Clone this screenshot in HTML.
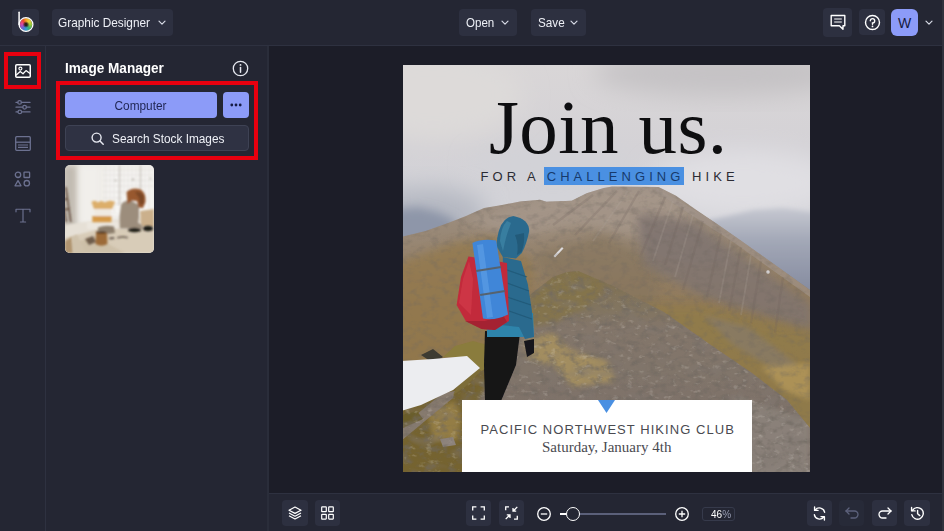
<!DOCTYPE html>
<html lang="en">
<head>
<meta charset="utf-8">
<title>Graphic Designer</title>
<style>
*{box-sizing:border-box;margin:0;padding:0}
html,body{width:944px;height:531px;overflow:hidden;background:#1c1d28;font-family:"Liberation Sans",sans-serif;color:#eef0f6}
.abs{position:absolute}
#top{left:0;top:0;width:944px;height:46px;background:#242633;border-bottom:1px solid #2e3140}
#rail{left:0;top:46px;width:46px;height:485px;background:#242633;border-right:1px solid #2e3140}
#panel{left:46px;top:46px;width:223px;height:485px;background:#242633;border-right:2px solid #2a2d3a}
#stage{left:269px;top:46px;width:675px;height:447px;background:#1c1d28}
#bottom{left:269px;top:493px;width:675px;height:38px;background:#242633;box-shadow:inset 0 1px 0 #2e3140}
.btn{position:absolute;background:#2d3040;border-radius:4px;color:#eef0f6;font-size:13px;display:flex;align-items:center;justify-content:center;white-space:nowrap}
.t{display:inline-block;transform:scaleX(.91);transform-origin:left center}
.red{position:absolute;border:3px solid #e8000f}
svg{position:absolute;overflow:visible}
</style>
</head>
<body>
<div id="top" class="abs">
  <div class="btn" style="left:12px;top:9px;width:27px;height:27px"></div>
  <div class="abs" style="left:19.900px;top:18.400px;width:12.200px;height:12.200px;border-radius:50%;background:radial-gradient(circle,#2a1d18 0,#2a1d18 12%,rgba(42,29,24,0) 38%),conic-gradient(from 0deg,#f2a01f,#e6d23a 12%,#9ccc3c 25%,#3fae6a 38%,#2f9fd0 50%,#5b6ed6 60%,#b04fc0 70%,#e64a8a 80%,#ea4a2e 90%,#f2a01f)"></div>
  <svg style="left:12px;top:9px" width="27" height="27" viewBox="0 0 27 27">
    <circle cx="14" cy="15.500" r="6.900" fill="none" stroke="#fff" stroke-width="1.300"/><path d="M7.100 3.300 V15.500" fill="none" stroke="#fff" stroke-width="1.500" stroke-linecap="round"/>
  </svg>
  <div class="btn" style="left:52px;top:9px;width:121px;height:27px;justify-content:flex-start;padding-left:6px"><span class="t">Graphic Designer</span></div>
  <svg style="left:158px;top:20px" width="8" height="6" viewBox="0 0 8 6"><path d="M1 1.2 L4 4.2 L7 1.2" fill="none" stroke="#d8dbe6" stroke-width="1.2" stroke-linecap="round" stroke-linejoin="round"/></svg>

  <div class="btn" style="left:459px;top:9px;width:58px;height:27px;justify-content:flex-start;padding-left:7px"><span class="t" style="transform:scaleX(.89)">Open</span></div>
  <svg style="left:501px;top:20px" width="8" height="6" viewBox="0 0 8 6"><path d="M1 1.2 L4 4.2 L7 1.2" fill="none" stroke="#d8dbe6" stroke-width="1.2" stroke-linecap="round" stroke-linejoin="round"/></svg>
  <div class="btn" style="left:531px;top:9px;width:55px;height:27px;justify-content:flex-start;padding-left:7px"><span class="t" style="transform:scaleX(.9)">Save</span></div>
  <svg style="left:570px;top:20px" width="8" height="6" viewBox="0 0 8 6"><path d="M1 1.2 L4 4.2 L7 1.2" fill="none" stroke="#d8dbe6" stroke-width="1.2" stroke-linecap="round" stroke-linejoin="round"/></svg>

  <div class="btn" style="left:823px;top:8px;width:29px;height:29px"></div>
  <svg style="left:830px;top:14px" width="16" height="17" viewBox="0 0 16 17"><path d="M1.2 1.5 H14.8 V11.8 H13 V15.2 L9.4 11.8 H1.2 Z" fill="none" stroke="#fff" stroke-width="1.4" stroke-linejoin="round"/><path d="M4.2 5 H11.8 M4.2 8 H11.8" stroke="#fff" stroke-width="1.2"/></svg>
  <div class="btn" style="left:859px;top:9px;width:26px;height:26px"></div>
  <svg style="left:864px;top:14px" width="17" height="17" viewBox="0 0 17 17"><circle cx="8.5" cy="8.5" r="7" fill="none" stroke="#fff" stroke-width="1.4"/><path d="M6.3 6.8 A2.2 2.2 0 1 1 8.5 9 V10.3" fill="none" stroke="#fff" stroke-width="1.4" stroke-linecap="round"/><circle cx="8.5" cy="12.4" r="0.9" fill="#fff"/></svg>
  <div class="btn" style="left:891px;top:9px;width:27px;height:27px;background:#8c9bf8;color:#151a3e;font-size:14px;border-radius:6px">W</div>
  <svg style="left:925px;top:20px" width="8" height="6" viewBox="0 0 8 6"><path d="M1 1.2 L4 4.2 L7 1.2" fill="none" stroke="#d8dbe6" stroke-width="1.2" stroke-linecap="round" stroke-linejoin="round"/></svg>
</div>

<div id="rail" class="abs">
  <svg style="left:15px;top:18px" width="16" height="14" viewBox="0 0 16 14"><rect x="0.75" y="0.75" width="14.5" height="12.5" rx="1" fill="none" stroke="#fff" stroke-width="1.5"/><circle cx="5.4" cy="4.6" r="1.5" fill="none" stroke="#fff" stroke-width="1.2"/><path d="M1 11.2 L5.2 7.6 L8 9.8 L11 6.6 L15 9.6" fill="none" stroke="#fff" stroke-width="1.3" stroke-linejoin="round"/></svg>
  <svg style="left:15px;top:53px" width="16" height="17" viewBox="0 0 16 17" fill="none" stroke="#6c7190" stroke-width="1.25" stroke-linecap="round"><path d="M1 3.400 H2.800 M6.400 3.400 H15 M1 8.200 H7.800 M11.400 8.200 H15 M1 12.900 H3 M6.600 12.900 H15"/><circle cx="4.600" cy="3.400" r="1.800"/><circle cx="9.600" cy="8.200" r="1.800"/><circle cx="4.800" cy="12.900" r="1.800"/></svg>
  <svg style="left:15px;top:90px" width="16" height="15" viewBox="0 0 16 15" fill="none" stroke="#6c7190" stroke-width="1.3"><rect x="0.7" y="0.7" width="14.6" height="13.6" rx="1"/><path d="M1 6.2 H15"/><path d="M3 9 H13 M3 11.4 H13" stroke-width="1.1"/></svg>
  <svg style="left:14px;top:125px" width="17" height="16" viewBox="0 0 17 16" fill="none" stroke="#6c7190" stroke-width="1.3" stroke-linejoin="round"><circle cx="4" cy="3.8" r="2.7"/><rect x="10" y="1.1" width="5.6" height="5.4" rx="0.6"/><path d="M4 9.6 L7 14.8 H1 Z"/><circle cx="12.8" cy="12.2" r="2.7"/></svg>
  <svg style="left:15px;top:162px" width="16" height="16" viewBox="0 0 16 16" fill="none" stroke="#6c7190" stroke-width="1.150" stroke-linecap="round" stroke-linejoin="round"><path d="M1 3.800 V1.200 H15 V3.800 M8 1.200 V14 M5.400 14 H10.600"/></svg>
</div>
<div class="red" style="left:4px;top:52px;width:37px;height:37px;border-width:4px"></div>
<div id="panel" class="abs">
  <div class="abs" style="left:19px;top:14px;font-size:14px;font-weight:bold;color:#fff;white-space:nowrap"><span class="t" style="transform:scaleX(.97)">Image Manager</span></div>
  <svg style="left:186px;top:14px" width="17" height="17" viewBox="0 0 17 17"><circle cx="8.5" cy="8.5" r="7.2" fill="none" stroke="#e6e8f0" stroke-width="1.3"/><path d="M8.5 7.6 V12.2" stroke="#e6e8f0" stroke-width="1.5" stroke-linecap="round"/><circle cx="8.5" cy="4.9" r="0.95" fill="#e6e8f0"/></svg>
  <div class="btn" style="left:19px;top:46px;width:152px;height:26px;background:#8c9bf8;color:#1f2552"><span class="t" style="transform-origin:center">Computer</span></div>
  <div class="btn" style="left:177px;top:46px;width:26px;height:26px;background:#8c9bf8"></div>
  <svg style="left:184px;top:57px" width="12" height="4" viewBox="0 0 12 4"><circle cx="1.800" cy="2" r="1.400" fill="#161b45"/><circle cx="6" cy="2" r="1.400" fill="#161b45"/><circle cx="10.200" cy="2" r="1.400" fill="#161b45"/></svg>
  <div class="btn" style="left:19px;top:79px;width:184px;height:26px;background:#2f3243;border:1px solid #3e4254;justify-content:flex-start;padding-left:46px"><span class="t">Search Stock Images</span></div>
  <svg style="left:45px;top:86px" width="13" height="13" viewBox="0 0 13 13"><circle cx="5.6" cy="5.6" r="4.5" fill="none" stroke="#e6e8f0" stroke-width="1.4"/><path d="M9 9 L12.2 12.2" stroke="#e6e8f0" stroke-width="1.5" stroke-linecap="round"/></svg>
  <svg style="left:19px;top:119px;overflow:hidden;border-radius:5px" width="89" height="88" viewBox="0 0 89 88">
    <defs><filter id="tb" x="-20%" y="-20%" width="140%" height="140%"><feGaussianBlur stdDeviation="0.9"/></filter><filter id="tb3" x="-30%" y="-30%" width="160%" height="160%"><feGaussianBlur stdDeviation="3"/></filter></defs>
    <rect width="89" height="88" fill="#e9e6e0"/>
    <rect x="-3" y="0" width="16" height="66" fill="#c2bcb2" filter="url(#tb3)"/>
    <rect x="14" y="0" width="22" height="60" fill="#f1efeb" filter="url(#tb3)"/>
    <rect x="38" y="0" width="52" height="52" fill="#f6f5f3" filter="url(#tb3)"/>
    <g stroke="#dcd8d2" stroke-width="0.7" opacity=".85" filter="url(#tb)"><path d="M41 0 V48 M45 0 V48 M49 0 V48 M59 0 V30 M63 0 V26 M67 0 V22 M71 0 V22 M80 0 V30 M84 0 V44 M38 5 H89 M38 10 H89 M38 15.500 H89 M38 21 H89 M38 27 H60 M38 33 H58 M38 39 H56"/></g>
    <g stroke="#cfcbc5" stroke-width="2" opacity=".9" filter="url(#tb)"><path d="M54.500 0 V40 M75.500 0 V24"/></g>
    <path d="M37.200 0 V36" stroke="#8f897f" stroke-width="0.9" filter="url(#tb)"/>
    <g fill="#6a5f55" opacity=".6" filter="url(#tb)"><circle cx="50.500" cy="15.500" r=".8"/><circle cx="68" cy="14.500" r=".9"/><circle cx="85.500" cy="13.500" r=".8"/></g>
    <path d="M0 22 L1.500 22 L6.500 57 L5 57Z M-4 30 L-2.500 30 L2 57 L0.500 57Z M-2 34 L3 33 L3 34.500 L-2 35.500Z M-1 44 L4.500 43 L4.500 44.500 L-1 45.500Z" fill="#5a4030" filter="url(#tb)"/>
    <path d="M0 60 L20 57 L52 55 L89 52 V88 H0Z" fill="#e6e0d6" filter="url(#tb)"/>
    <path d="M22 57 H53 V64 H22Z" fill="#ece7df" filter="url(#tb)"/>
    <path d="M75 46 L89 44 V62 L76 62Z" fill="#cbb08c" filter="url(#tb)"/>
    <path d="M0 73 L33 64.500 L62 63.500 L89 63 V88 H0Z" fill="#d8ccb8" filter="url(#tb)"/>
    <path d="M0 80 L30 72 L60 88 H0Z" fill="#cbbda5" opacity=".8" filter="url(#tb)"/>
    <path d="M0 76 L7 72 L8 88 H0Z" fill="#b09470" filter="url(#tb)"/>
    <path d="M7 72 L12 69.500 L20 86 L19 88 H8Z" fill="#cfc2ac" filter="url(#tb)"/>
    <g filter="url(#tb)">
    <path d="M29 44 L46 44 L46 51 L30 51Z" fill="#f0eae1"/>
    <path d="M26.500 37 Q30 34.500 33 37.500 Q36 34.500 40 37.500 Q44 34.500 50 37 L47 44 L29 44Z" fill="#dcae6a"/>
    <rect x="27.300" y="51" width="19.200" height="6.200" fill="#d59a48"/>
    <path d="M56 40 Q58 35 66 35.500 L74 40 L74 52 L72 63.500 L55 63.500 L54.500 52Z" fill="#9c8d7c"/>
    <path d="M61.500 27 Q67 21.500 76 24.500 Q81.500 29 80.500 37 L78 43 L73.500 42.500 L72 36 L67 35.500 L62.500 39Z" fill="#98592f"/>
    <path d="M70 27 Q76 26 79 31 L78.500 39 L75 40 L74 33Z" fill="#6e3f22" opacity=".7"/>
    <path d="M70 56 L77 60 L78 64 L70 63Z" fill="#9c8d7c"/>
    <path d="M31 67.500 Q30.500 66 36.500 66 Q42.500 66 42 67.500 L42.500 79 Q36.500 82.500 30.500 79Z" fill="#9c6a38"/>
    <ellipse cx="36.500" cy="67.200" rx="5.300" ry="1.300" fill="#4e3520"/>
    <path d="M33 62.500 Q40 59.500 49 61.500 L50 68 L42.500 69 L42 67 Q37 65.500 33 67Z" fill="#8c7e6c"/>
    <ellipse cx="69.500" cy="65" rx="6.800" ry="2.200" fill="#1d1a18"/>
    <ellipse cx="83" cy="63.500" rx="5.200" ry="2.800" fill="#1d1a18"/>
    <path d="M20 74 L28 71 L31 77 L24 80Z" fill="#5e4a3a" opacity=".85"/>
    <path d="M44 72.500 L49 72 L49.500 74 L44.500 74.500Z M52 72 L58 71 L58.500 72.500 L52.500 73.500Z M58 71 L63 72 L62.500 73.500 L58 72.500Z" fill="#4e4036" opacity=".8"/>
    </g>
  </svg>
</div>
<div class="red" style="left:56px;top:81px;width:202px;height:79px;border-width:4px"></div>
<div id="stage" class="abs"></div>
<svg id="photo" style="left:403px;top:65px;overflow:hidden" width="407" height="407" viewBox="0 0 407 407">
  <defs>
    <linearGradient id="sky" x1="0" y1="0" x2="0" y2="1"><stop offset="0" stop-color="#d9d6d7"/><stop offset=".2" stop-color="#d4d2d6"/><stop offset=".32" stop-color="#d3d3d8"/><stop offset=".45" stop-color="#d2d3d9"/><stop offset="1" stop-color="#c5c7d0"/></linearGradient>
    <linearGradient id="far" x1="0" y1="0" x2="0" y2="1"><stop offset="0" stop-color="#c6c8d1"/><stop offset=".3" stop-color="#a3a8b7"/><stop offset=".7" stop-color="#8a90a3"/><stop offset="1" stop-color="#7c8296"/></linearGradient>
    <linearGradient id="mtn" x1="0" y1="0" x2="0" y2="1"><stop offset="0" stop-color="#a09389"/><stop offset=".2" stop-color="#978672"/><stop offset=".4" stop-color="#917a5b"/><stop offset=".7" stop-color="#8a7448"/><stop offset="1" stop-color="#7c6540"/></linearGradient>
    <linearGradient id="ridge" x1="0" y1="0" x2="0" y2="1"><stop offset="0" stop-color="#80714f"/><stop offset=".3" stop-color="#83766b"/><stop offset="1" stop-color="#7a6f68"/></linearGradient>
    <filter id="b1" x="-10%" y="-10%" width="120%" height="120%"><feGaussianBlur stdDeviation="0.7"/></filter>
    <filter id="b2" x="-20%" y="-20%" width="140%" height="140%"><feGaussianBlur stdDeviation="2.5"/></filter>
    <filter id="b3" x="-20%" y="-20%" width="140%" height="140%"><feGaussianBlur stdDeviation="5"/></filter>
    <filter id="b8" x="-30%" y="-30%" width="160%" height="160%"><feGaussianBlur stdDeviation="12"/></filter>
    <filter id="nz" x="0" y="0" width="100%" height="100%"><feTurbulence type="fractalNoise" baseFrequency="0.11 0.16" numOctaves="3" seed="7"/><feColorMatrix type="matrix" values="0 0 0 0 0.16  0 0 0 0 0.14  0 0 0 0 0.12  0 0 0 2.2 -1.05"/></filter>
    <filter id="nz2" x="0" y="0" width="100%" height="100%"><feTurbulence type="fractalNoise" baseFrequency="0.13 0.2" numOctaves="3" seed="21"/><feColorMatrix type="matrix" values="0 0 0 0 0.80  0 0 0 0 0.76  0 0 0 0 0.70  0 0 0 2.4 -1.45"/></filter>
    <filter id="nz3" x="0" y="0" width="100%" height="100%"><feTurbulence type="fractalNoise" baseFrequency="0.045 0.07" numOctaves="2" seed="4"/><feColorMatrix type="matrix" values="0 0 0 0 0.22  0 0 0 0 0.19  0 0 0 0 0.17  0 0 0 3 -1.5"/></filter>
    <clipPath id="cM"><path d="M0 171.5 L22.6 166 L45 158 L63 151 L81 143 L99 140 L117 136.5 L137 134.7 L143.4 136.8 L168.8 135.7 L183.6 128.3 L200.6 123 L209 121.5 L255.6 122 L272.6 130.4 L293.8 145.3 L317 161 L337 175 L368 197 L407 225 V407 H0Z"/></clipPath>
    <clipPath id="cR"><path d="M128 229 L150 212 L164 207 L175 206 L208 220 L261 247 L305 278 L349 308 L384 335 L407 363 V407 H0 V345 L50 325 L77 303 L95 270Z"/></clipPath>
  </defs>
  <rect width="407" height="407" fill="url(#sky)"/>
  <ellipse cx="30" cy="30" rx="90" ry="45" fill="#dddad9" filter="url(#b8)"/>
  <ellipse cx="320" cy="8" rx="130" ry="24" fill="#c5c2c5" filter="url(#b8)"/>
  <ellipse cx="340" cy="118" rx="95" ry="34" fill="#e0dfe3" filter="url(#b8)"/>
  <ellipse cx="150" cy="100" rx="80" ry="20" fill="#d2d2d7" filter="url(#b8)"/>
  <!-- distant hills / haze -->
  <path d="M-20 125 L40 122 L80 135 L80 190 L-20 190Z" fill="#b4b7c1" filter="url(#b8)"/>
  <path d="M-10 145 L15 142 L35 147 L52 155 L52 190 L-10 190Z" fill="#8e96a9" filter="url(#b3)"/>
  <path d="M285 160 L325 151 L350 145 L380 143 L415 148 V250 H285Z" fill="url(#far)" filter="url(#b2)"/>
  <!-- main mountain -->
  <path d="M0 171.5 L22.6 166 L45 158 L63 151 L81 143 L99 140 L117 136.5 L137 134.7 L143.4 136.8 L168.8 135.7 L183.6 128.3 L200.6 123 L209 121.5 L255.6 122 L272.6 130.4 L293.8 145.3 L317 161 L337 175 L368 197 L407 225 V407 H0Z" fill="url(#mtn)" filter="url(#b1)"/>
  <g clip-path="url(#cM)">
    <path d="M-10 200 L50 178 L100 170 L130 200 L120 260 L60 300 L-10 330Z" fill="#93784c" opacity=".75" filter="url(#b3)"/>
    <path d="M60 155 L128 137 L200 126 L255 124 L290 150 L250 175 L180 160 L110 172Z" fill="#a6978a" opacity=".8" filter="url(#b3)"/>
    <path d="M236 150 L290 160 L330 195 L290 200 L240 185Z" fill="#8a7e78" opacity=".7" filter="url(#b3)"/>
    <path d="M130 190 L200 170 L260 200 L250 260 L160 240Z" fill="#86765f" opacity=".7" filter="url(#b3)"/>
    <path d="M236 150 L290 158 L345 195 L410 240 L410 268 L300 232 L240 200Z" fill="#80756f" opacity=".85" filter="url(#b3)"/>
    <path d="M230 240 L300 240 L420 270 V420 H390 L300 290Z" fill="#917b4b" opacity=".9" filter="url(#b3)"/><path d="M300 250 L345 262 L395 300 L380 310 L330 280Z" fill="#857a70" opacity=".6" filter="url(#b2)"/>
    <path d="M358 302 L407 298 V335 L382 326Z" fill="#b3975a" opacity=".8" filter="url(#b2)"/>
    <path d="M250 123 L262 128 L300 150 L335 171 L368 196 L407 225 V232 L330 177 L262 133Z" fill="#a3978e" opacity=".6" filter="url(#b1)"/>
    <g stroke="#6e625c" stroke-width="2.4" opacity=".22" fill="none" filter="url(#b1)"><path d="M262 132 L238 190 M280 142 L262 200 M300 156 L280 225 M318 168 L304 232 M338 182 L326 246 M358 196 L348 258 M380 212 L372 268 M236 126 L206 178 M214 126 L172 170 M190 130 L150 160"/></g>
    <g stroke="#b3a79e" stroke-width="1.8" opacity=".22" fill="none" filter="url(#b1)"><path d="M270 136 L250 196 M290 150 L272 212 M328 175 L316 238 M348 190 L338 250 M225 126 L190 176"/></g>
    <path d="M150.500 191 L159 182 L160.500 183.500 L152 192.500Z" fill="#e6e6ea" opacity=".9"/>
    <circle cx="365" cy="207" r="1.800" fill="#e6e6ea" opacity=".9"/>
    <rect width="407" height="407" filter="url(#nz)" opacity=".4"/>
  </g>
  <!-- foreground ridge -->
  <path d="M128 229 L150 212 L164 207 L175 206 L208 220 L261 247 L305 278 L349 308 L384 335 L407 363 V407 H0 V345 L50 325 L77 303 L95 270Z" fill="url(#ridge)" filter="url(#b1)"/>
  <g clip-path="url(#cR)">
    <path d="M128 232 L150 212 L175 206 L200 216 L195 236 L150 258 L125 262Z" fill="#85754a" opacity=".8" filter="url(#b2)"/>
    <path d="M121 274 L150 268 L166 284 L204 296 L212 316 L170 322 L150 300 L124 294Z" fill="#a8925f" opacity=".85" filter="url(#b2)"/>
    <path d="M30 300 L85 270 L95 300 L75 335 L60 420 H-10 V340Z" fill="#74632f" opacity=".95" filter="url(#b2)"/><path d="M24 346 L52 336 L58 350 L56 374 L30 376Z" fill="#9a8248" opacity=".85" filter="url(#b2)"/><path d="M-2 362 L40 328 L52 326 L50 333 L22 356 L-2 376Z" fill="#8a7e76" opacity=".9" filter="url(#b1)"/><path d="M-2 350 L14 346 L20 354 L-2 364Z" fill="#6a5c2c" opacity=".9" filter="url(#b1)"/><path d="M37 374 L50 372 L53 380 L40 382Z" fill="#8d837b" filter="url(#b1)"/>
    <path d="M50 275 L90 268 L90 300 L70 306Z" fill="#87773a" opacity=".9" filter="url(#b2)"/>
    <path d="M330 330 L407 355 V420 H350Z" fill="#8e857d" opacity=".8" filter="url(#b2)"/>
    <rect width="407" height="407" filter="url(#nz3)" opacity=".5"/>
    <rect width="407" height="407" filter="url(#nz)" opacity=".8"/>
    <rect width="407" height="407" filter="url(#nz2)" opacity=".4"/>
  </g>
  <path d="M40 292 L52 281 L70 276 L84 280 L90 300 L78 306 L64 292Z" fill="#8a7b3c" filter="url(#b1)"/>
  <path d="M64 292 L78 306 L62 322 L50 330 L60 310Z" fill="#7d6d38" filter="url(#b1)"/>
  <!-- dark rocks above snow -->
  <path d="M18 290 L30 284 L40 292 L30 298Z" fill="#3d3a33" filter="url(#b1)"/>
  <!-- snow -->
  <path d="M-2 296 L30 294 L64 291 L77 303 L50 325 L18 340 L-2 346Z" fill="#ecedf0" filter="url(#b1)"/>
  <!-- hiker -->
  <g filter="url(#b1)">
  <path d="M82 266 L117 268 L113 300 L98 336 H82 L81 300Z" fill="#141418"/>
  <path d="M84 252 L130 248 L131 272 L84 272Z" fill="#2f84ab"/>
  <path d="M99.800 192 L118 196 L124.800 219 L128.800 245 L131 272 L122 274 L116 262 L98 260 L100 230Z" fill="#2a6a8e"/>
  <path d="M110.300 151 Q100 152 95.800 166 Q93 176 94 182 L99.800 192 L113 193.500 L118.800 188 Q124 178 126.200 166 Q126 154 110.300 151Z" fill="#2c6b8e"/>
  <path d="M104 156 Q98 162 97 176 L100 186 Q103 170 108 158Z" fill="#3f86a8" opacity=".7"/>
  <path d="M112 170 Q116 180 114 190 L118.500 187 Q122 178 121 168Z" fill="#1f5270" opacity=".7"/>
  <path d="M104 205 L124 212 M104 218 L126 226 M104 232 L128 240 M106 246 L129 254" stroke="#1f5674" stroke-width="1.300" fill="none" opacity=".8"/>
  <path d="M53.600 240 L58 212 L65.500 191.500 L72 192.500 L104 198 L106 256 L92 265 L78.700 264 L62.800 256Z" fill="#c22a3b"/>
  <path d="M56 238 L60 214 L66 196 L70 214 L68 250Z" fill="#d23a48" opacity=".7"/>
  <path d="M62 256 L78.700 264 L92 265 L104 257 L100 250 L82 256Z" fill="#9c1f30" opacity=".8"/>
  <path d="M69.400 178 Q80 173 93.200 175.600 L105 249.500 Q92 256 80 253.500Z" fill="#3f86d8"/>
  <path d="M74 180 L80 179 L90 252 L84 253Z" fill="#5b9ce6" opacity=".7"/>
  <path d="M73 205 L98 201 L98.300 203 L73.300 207Z M77 229 L102 225 L102.300 227 L77.300 231Z" fill="#56626e"/>
  <path d="M121 276 L131 274 L131 288 L124 292Z" fill="#16161b"/>
  </g>
</svg>
<div class="abs" id="ttl" style="left:403px;top:65px;width:407px;height:407px;overflow:hidden">
  <div class="abs" style="left:86px;top:19px;font-family:'Liberation Serif',serif;font-size:77px;line-height:86px;letter-spacing:.4px;color:#0e0e10;white-space:nowrap">Join us.</div>
  <div class="abs" style="left:140.5px;top:102px;width:140.5px;height:18px;background:#4a90e2"></div>
  <div class="abs" style="left:77.500px;top:105px;font-size:13px;line-height:14px;letter-spacing:4.05px;color:#2b2b33;white-space:nowrap">FOR A <span style="color:#173a6b">CHALLENGING</span> HIKE</div>
  <div class="abs" style="left:59px;top:335px;width:290px;height:72px;background:#fff"></div>
  <svg style="left:195px;top:335px" width="17" height="13" viewBox="0 0 17 13"><path d="M0 0 H17 L8.5 13Z" fill="#4a90e2"/></svg>
  <div class="abs" style="left:77.500px;top:357.700px;font-size:13px;line-height:14px;letter-spacing:1.05px;color:#4a4a50;white-space:nowrap">PACIFIC NORTHWEST HIKING CLUB</div>
  <div class="abs" style="left:139px;top:373.700px;font-family:'Liberation Serif',serif;font-size:15px;line-height:17px;color:#4a4a50;white-space:nowrap">Saturday, January 4th</div>
</div>
<div id="bottom" class="abs">
  <div class="btn" style="left:13px;top:7px;width:26px;height:26px"></div>
  <svg style="left:19px;top:13px" width="14" height="14" viewBox="0 0 14 14" fill="none" stroke="#fff" stroke-width="1.2" stroke-linejoin="round"><path d="M7 1 L13 4.2 L7 7.4 L1 4.2Z"/><path d="M1 7 L7 10.2 L13 7"/><path d="M1 9.8 L7 13 L13 9.8"/></svg>
  <div class="btn" style="left:46px;top:7px;width:25px;height:26px"></div>
  <svg style="left:52px;top:13px" width="13" height="14" viewBox="0 0 13 14" fill="none" stroke="#fff" stroke-width="1.2"><rect x="0.7" y="0.9" width="4.6" height="4.8" rx="0.5"/><rect x="7.7" y="0.9" width="4.6" height="4.8" rx="0.5"/><rect x="0.7" y="8.3" width="4.6" height="4.8" rx="0.5"/><rect x="7.7" y="8.3" width="4.6" height="4.8" rx="0.5"/></svg>
  <div class="btn" style="left:197px;top:7px;width:25px;height:26px"></div>
  <svg style="left:203px;top:13px" width="13" height="14" viewBox="0 0 13 14" fill="none" stroke="#fff" stroke-width="1.3"><path d="M0.7 4.6 V0.9 H4.4 M8.6 0.9 H12.3 V4.6 M12.3 9.4 V13.1 H8.6 M4.4 13.1 H0.7 V9.4"/></svg>
  <div class="btn" style="left:230px;top:7px;width:25px;height:26px"></div>
  <svg style="left:236px;top:13px" width="13" height="14" viewBox="0 0 13 14" fill="none" stroke="#fff" stroke-width="1.3"><path d="M0.7 4.2 V0.9 H4 M12.3 9.8 V13.1 H9"/><path d="M12.3 0.9 L8 5.2 M8 2 V5.2 H11.2 M0.7 13.1 L5 8.8 M5 12 V8.8 H1.8"/></svg>
  <svg style="left:267px;top:13px" width="16" height="16" viewBox="0 0 16 16" fill="none" stroke="#fff" stroke-width="1.3"><circle cx="8" cy="8" r="6.3"/><path d="M4.8 8 H11.2"/></svg>
  <div class="abs" style="left:291px;top:20px;width:106px;height:1.5px;background:#5b607a"></div>
  <div class="abs" style="left:291px;top:19.5px;width:8px;height:2px;background:#fff"></div>
  <div class="abs" style="left:297px;top:14px;width:14px;height:14px;border:1.5px solid #fff;border-radius:50%;background:#242633"></div>
  <svg style="left:405px;top:13px" width="16" height="16" viewBox="0 0 16 16" fill="none" stroke="#fff" stroke-width="1.3"><circle cx="8" cy="8" r="6.3"/><path d="M4.8 8 H11.2 M8 4.8 V11.2"/></svg>
  <div class="abs" style="left:433px;top:14px;width:33px;height:14px;border:1px solid #363a4b;border-radius:3px;font-size:11px;line-height:12px;text-align:right;padding-right:3px;color:#fff;white-space:nowrap"><span class="t" style="transform-origin:right center">46<span style="color:#9a9fb5">%</span></span></div>
  <div class="btn" style="left:538px;top:7px;width:25px;height:26px"></div>
  <svg style="left:543px;top:13px" width="15" height="15" viewBox="0 0 15 15" fill="none" stroke="#fff" stroke-width="1.4" stroke-linecap="round" stroke-linejoin="round"><path d="M12.6 6.2 A5.3 5.3 0 0 0 3.2 4"/><path d="M2.4 8.8 A5.3 5.3 0 0 0 11.8 11"/><path d="M2.6 1 V4.4 H6" /><path d="M12.4 14 V10.6 H9"/></svg>
  <div class="btn" style="left:570px;top:7px;width:25px;height:26px;background:#272a38"></div>
  <svg style="left:576px;top:14px" width="14" height="12" viewBox="0 0 14 12" fill="none" stroke="#5d627c" stroke-width="1.3" stroke-linecap="round" stroke-linejoin="round"><path d="M4 1 L1 4 L4 7"/><path d="M1 4 H9.5 A3.5 3.5 0 0 1 9.5 11 H6"/></svg>
  <div class="btn" style="left:603px;top:7px;width:25px;height:26px"></div>
  <svg style="left:609px;top:14px" width="14" height="12" viewBox="0 0 14 12" fill="none" stroke="#fff" stroke-width="1.3" stroke-linecap="round" stroke-linejoin="round"><path d="M10 1 L13 4 L10 7"/><path d="M13 4 H4.5 A3.5 3.5 0 0 0 4.5 11 H8"/></svg>
  <div class="btn" style="left:635px;top:7px;width:26px;height:26px"></div>
  <svg style="left:641px;top:13px" width="15" height="15" viewBox="0 0 15 15" fill="none" stroke="#fff" stroke-width="1.4" stroke-linecap="round" stroke-linejoin="round"><path d="M2.4 4.6 A5.8 5.8 0 1 1 1.8 8.6"/><path d="M1.6 1.4 V4.9 H5.1"/><path d="M7.6 4.4 V7.8 L9.8 9.6"/></svg>
</div>
<div class="abs" style="left:942px;top:0;width:2px;height:531px;background:#30323d"></div>
</body>
</html>
